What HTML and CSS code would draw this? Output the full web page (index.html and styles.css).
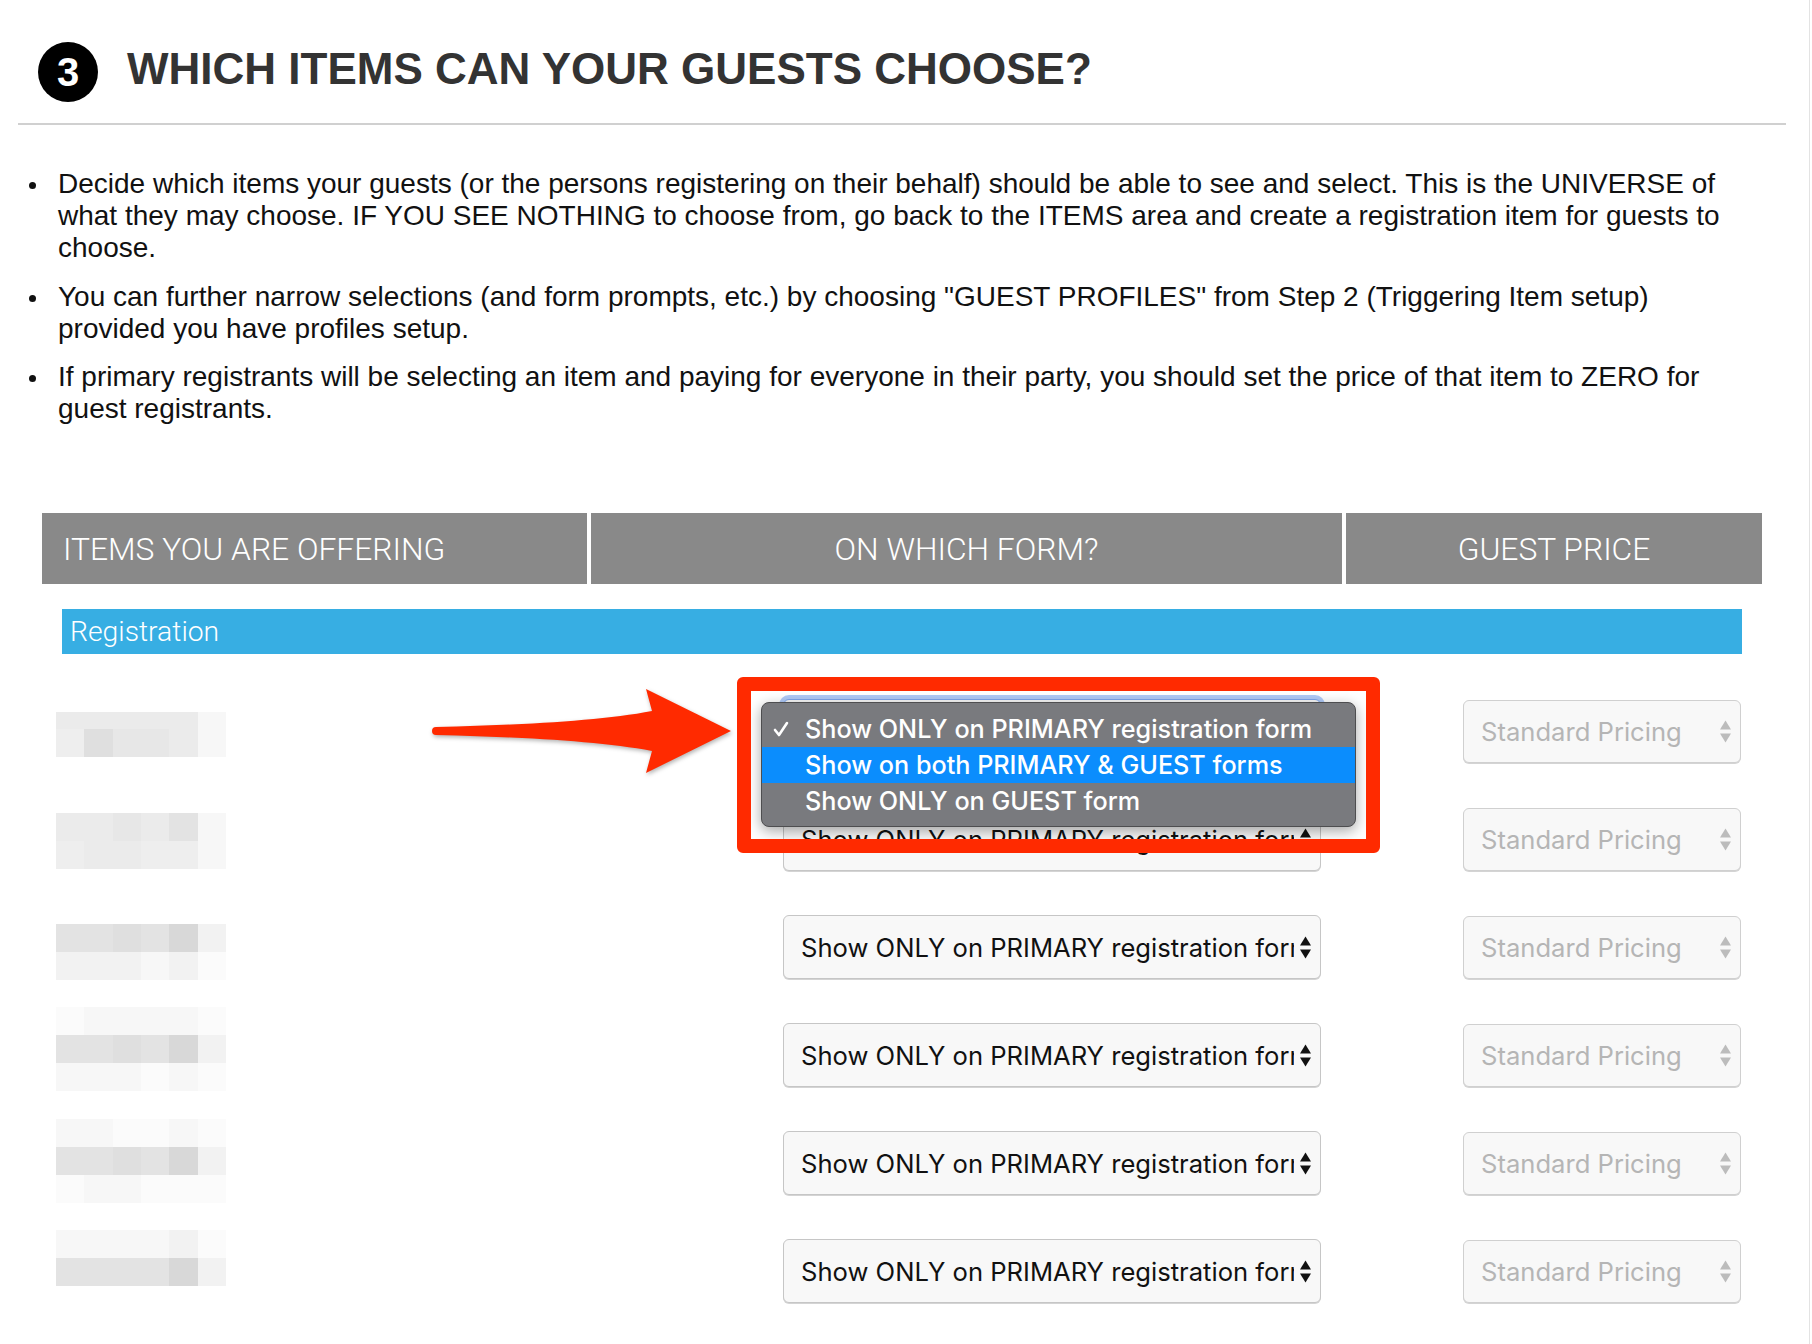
FILE: index.html
```html
<!DOCTYPE html>
<html>
<head>
<meta charset="utf-8">
<title>Which items can your guests choose?</title>
<link rel="stylesheet" href="styles.css">
</head>
<body>
<div class="page">
  <header class="step-head">
    <span class="step-num">3</span>
    <h1 class="step-title">WHICH ITEMS CAN YOUR GUESTS CHOOSE?</h1>
  </header>
  <div class="rule"></div>

  <ul class="notes">
    <li>Decide which items your guests (or the persons registering on their behalf) should be able to see and select. This is the UNIVERSE of what they may choose. IF YOU SEE NOTHING to choose from, go back to the ITEMS area and create a registration item for guests to choose.</li>
    <li>You can further narrow selections (and form prompts, etc.) by choosing "GUEST PROFILES" from Step 2 (Triggering Item setup) provided you have profiles setup.</li>
    <li>If primary registrants will be selecting an item and paying for everyone in their party, you should set the price of that item to ZERO for guest registrants.</li>
  </ul>

  <div class="table-head">
    <div class="th th-left">ITEMS YOU ARE OFFERING</div>
    <div class="th">ON WHICH FORM?</div>
    <div class="th">GUEST PRICE</div>
  </div>

  <div class="group-bar">Registration</div>

  <div class="rows">
    <div class="row">
      <div class="mosaic mo1">
        <i class="k5 short"></i><i class="k5 short"></i><i class="k5 short"></i><i class="k5 short"></i><i class="k5 short"></i><i class="k2 short"></i>
        <i class="k4"></i><i class="k8"></i><i class="k6"></i><i class="k6"></i><i class="k5"></i><i class="k2"></i>
      </div>
      <div class="select-wrap open">
        <div class="select focused">
          <span class="select-text">Show ONLY on PRIMARY registration form</span>
          <svg class="updown" width="11" height="23" viewBox="0 0 11 23"><polygon points="0,9.5 5.5,0.5 11,9.5"/><polygon points="0,13.5 11,13.5 5.5,22.5"/></svg>
        </div>
        <div class="menu">
          <div class="menu-item">
            <svg class="check" width="16" height="16" viewBox="0 0 16 16"><path d="M2 9 L6 14 L14 2"/></svg>
            Show ONLY on PRIMARY registration form
          </div>
          <div class="menu-item active">Show on both PRIMARY &amp; GUEST forms</div>
          <div class="menu-item">Show ONLY on GUEST form</div>
        </div>
        <div class="callout"></div>
        <svg class="pointer" width="310" height="96" viewBox="0 0 310 96"><path d="M6 42 C90 40 170 36 222 26 L216 4 L301 46 L216 88 L222 66 C170 56 90 52 6 50 A4 4 0 0 1 6 42 Z"/></svg>
      </div>
      <div class="select price">
        <span class="select-text">Standard Pricing</span>
        <svg class="updown" width="11" height="23" viewBox="0 0 11 23"><polygon points="0,9.5 5.5,0.5 11,9.5"/><polygon points="0,13.5 11,13.5 5.5,22.5"/></svg>
      </div>
    </div>

    <div class="row">
      <div class="mosaic mo2">
        <i class="k5"></i><i class="k5"></i><i class="k6"></i><i class="k5"></i><i class="k7"></i><i class="k2"></i>
        <i class="k4"></i><i class="k5"></i><i class="k5"></i><i class="k4"></i><i class="k4"></i><i class="k2"></i>
      </div>
      <div class="select-wrap">
        <div class="select">
          <span class="select-text">Show ONLY on PRIMARY registration form</span>
          <svg class="updown" width="11" height="23" viewBox="0 0 11 23"><polygon points="0,9.5 5.5,0.5 11,9.5"/><polygon points="0,13.5 11,13.5 5.5,22.5"/></svg>
        </div>
      </div>
      <div class="select price">
        <span class="select-text">Standard Pricing</span>
        <svg class="updown" width="11" height="23" viewBox="0 0 11 23"><polygon points="0,9.5 5.5,0.5 11,9.5"/><polygon points="0,13.5 11,13.5 5.5,22.5"/></svg>
      </div>
    </div>

    <div class="row">
      <div class="mosaic mo3">
        <i class="k7"></i><i class="k7"></i><i class="k8"></i><i class="k7"></i><i class="k9"></i><i class="k3"></i>
        <i class="k3"></i><i class="k3"></i><i class="k3"></i><i class="k2"></i><i class="k3"></i><i class="k1"></i>
      </div>
      <div class="select-wrap">
        <div class="select">
          <span class="select-text">Show ONLY on PRIMARY registration form</span>
          <svg class="updown" width="11" height="23" viewBox="0 0 11 23"><polygon points="0,9.5 5.5,0.5 11,9.5"/><polygon points="0,13.5 11,13.5 5.5,22.5"/></svg>
        </div>
      </div>
      <div class="select price">
        <span class="select-text">Standard Pricing</span>
        <svg class="updown" width="11" height="23" viewBox="0 0 11 23"><polygon points="0,9.5 5.5,0.5 11,9.5"/><polygon points="0,13.5 11,13.5 5.5,22.5"/></svg>
      </div>
    </div>

    <div class="row">
      <div class="mosaic mo4">
        <i class="k1"></i><i class="k2"></i><i class="k2"></i><i class="k2"></i><i class="k2"></i><i class="k1"></i>
        <i class="k7"></i><i class="k7"></i><i class="k8"></i><i class="k7"></i><i class="k9"></i><i class="k3"></i>
        <i class="k2"></i><i class="k2"></i><i class="k2"></i><i class="k1"></i><i class="k2"></i><i class="k1"></i>
      </div>
      <div class="select-wrap">
        <div class="select">
          <span class="select-text">Show ONLY on PRIMARY registration form</span>
          <svg class="updown" width="11" height="23" viewBox="0 0 11 23"><polygon points="0,9.5 5.5,0.5 11,9.5"/><polygon points="0,13.5 11,13.5 5.5,22.5"/></svg>
        </div>
      </div>
      <div class="select price">
        <span class="select-text">Standard Pricing</span>
        <svg class="updown" width="11" height="23" viewBox="0 0 11 23"><polygon points="0,9.5 5.5,0.5 11,9.5"/><polygon points="0,13.5 11,13.5 5.5,22.5"/></svg>
      </div>
    </div>

    <div class="row">
      <div class="mosaic mo5">
        <i class="k2"></i><i class="k2"></i><i class="k1"></i><i class="k1"></i><i class="k2"></i><i class="k1"></i>
        <i class="k7"></i><i class="k7"></i><i class="k8"></i><i class="k7"></i><i class="k9"></i><i class="k3"></i>
        <i class="k1"></i><i class="k2"></i><i class="k2"></i><i class="k1"></i><i class="k1"></i><i class="k1"></i>
      </div>
      <div class="select-wrap">
        <div class="select">
          <span class="select-text">Show ONLY on PRIMARY registration form</span>
          <svg class="updown" width="11" height="23" viewBox="0 0 11 23"><polygon points="0,9.5 5.5,0.5 11,9.5"/><polygon points="0,13.5 11,13.5 5.5,22.5"/></svg>
        </div>
      </div>
      <div class="select price">
        <span class="select-text">Standard Pricing</span>
        <svg class="updown" width="11" height="23" viewBox="0 0 11 23"><polygon points="0,9.5 5.5,0.5 11,9.5"/><polygon points="0,13.5 11,13.5 5.5,22.5"/></svg>
      </div>
    </div>

    <div class="row">
      <div class="mosaic mo6">
        <i class="k2"></i><i class="k2"></i><i class="k2"></i><i class="k2"></i><i class="k3"></i><i class="k1"></i>
        <i class="k7"></i><i class="k7"></i><i class="k7"></i><i class="k7"></i><i class="k9"></i><i class="k3"></i>
      </div>
      <div class="select-wrap">
        <div class="select">
          <span class="select-text">Show ONLY on PRIMARY registration form</span>
          <svg class="updown" width="11" height="23" viewBox="0 0 11 23"><polygon points="0,9.5 5.5,0.5 11,9.5"/><polygon points="0,13.5 11,13.5 5.5,22.5"/></svg>
        </div>
      </div>
      <div class="select price">
        <span class="select-text">Standard Pricing</span>
        <svg class="updown" width="11" height="23" viewBox="0 0 11 23"><polygon points="0,9.5 5.5,0.5 11,9.5"/><polygon points="0,13.5 11,13.5 5.5,22.5"/></svg>
      </div>
    </div>
  </div>
</div>
</body>
</html>
```

FILE: styles.css
```css
* { box-sizing: border-box; }

html, body {
  margin: 0;
  padding: 0;
  background: #ffffff;
}

body {
  font-family: "Liberation Sans", Arial, Helvetica, sans-serif;
  color: #111111;
}

.page {
  width: 1810px;
  min-height: 1344px;
  border-right: 1px solid #e3e3e3;
  overflow: hidden;
}

/* ---------- step heading ---------- */
.step-head {
  display: flex;
  align-items: center;
  gap: 29px;
  padding: 42px 0 0 38px;
}

.step-num {
  width: 60px;
  height: 60px;
  border-radius: 50%;
  background: #000000;
  color: #ffffff;
  font-weight: bold;
  font-size: 40px;
  display: flex;
  align-items: center;
  justify-content: center;
  flex: none;
}

.step-title {
  margin: 0;
  padding-bottom: 7px;
  font-size: 44px;
  font-weight: bold;
  color: #333333;
  line-height: 53px;
}

.rule {
  margin: 21px 0 0 18px;
  width: 1768px;
  height: 2px;
  background: #d0d0d0;
}

/* ---------- notes ---------- */
.notes {
  list-style: none;
  margin: 43px 0 0 0;
  padding: 0 0 0 58px;
  width: 1740px;
  font-size: 28px;
  line-height: 32px;
  color: #111111;
}

.notes li {
  position: relative;
  margin-bottom: 16.5px;
}

.notes li::before {
  content: "";
  position: absolute;
  left: -29px;
  top: 14px;
  width: 7px;
  height: 7px;
  border-radius: 50%;
  background: #111111;
}

.notes li:last-child {
  margin-bottom: 0;
}

/* ---------- table head ---------- */
.table-head {
  display: grid;
  grid-template-columns: 545px 751px 416px;
  column-gap: 4px;
  margin: 88px 0 0 42px;
}

.th {
  height: 71px;
  background: #898989;
  color: #ffffff;
  font-family: Roboto, "Liberation Sans", sans-serif;
  font-weight: 300;
  font-size: 31.8px;
  display: flex;
  align-items: center;
  justify-content: center;
}

.th-left {
  justify-content: flex-start;
  padding-left: 21px;
}

.group-bar {
  margin: 25px 0 0 62px;
  width: 1680px;
  height: 45px;
  background: #37aee3;
  color: #ffffff;
  font-family: Roboto, "Liberation Sans", sans-serif;
  font-weight: 300;
  font-size: 28.3px;
  display: flex;
  align-items: center;
  padding-left: 8px;
}

/* ---------- rows ---------- */
.rows {
  margin-top: 23px;
  padding-left: 56px;
}

.row {
  display: flex;
  align-items: center;
  height: 108px;
}

.mosaic {
  display: grid;
  grid-template-columns: repeat(6, 28.33px);
  grid-auto-rows: 28px;
  width: 170px;
  margin-right: 557px;
  align-self: flex-start;
  flex: none;
}

.mosaic i { display: block; }
.mosaic i.short { height: 17px; }
.mo1 { margin-top: 35px; grid-template-rows: 17px 28px; }
.mo2 { margin-top: 28px; }
.mo3 { margin-top: 31px; }
.mo4 { margin-top: 6px; }
.mo5 { margin-top: 10px; }
.mo6 { margin-top: 13px; }

.k1 { background: #fbfbfb; }
.k2 { background: #f7f7f7; }
.k3 { background: #f2f2f2; }
.k4 { background: #eeeeee; }
.k5 { background: #ebebeb; }
.k6 { background: #e7e7e7; }
.k7 { background: #e3e3e3; }
.k8 { background: #dfdfdf; }
.k9 { background: #d8d8d8; }

.select-wrap {
  position: relative;
  width: 538px;
  flex: none;
}

.select-wrap.open { z-index: 2; }

.select {
  height: 64px;
  border: 1px solid #c6c6c6;
  border-radius: 6px;
  background: #f8f8f8;
  box-shadow: 0 1px 0 #d4d4d4;
  display: flex;
  align-items: center;
  padding: 0 9px 0 17px;
  font-family: Inter, "Noto Sans", sans-serif;
  font-size: 25.6px;
  color: #111111;
}

.select.focused {
  border-color: #7ea6ee;
  box-shadow: 0 0 0 4px rgba(112, 158, 240, 0.55);
}

.select-text {
  flex: 1;
  white-space: nowrap;
  overflow: hidden;
}

.updown {
  flex: none;
  margin-left: 6px;
  fill: #111111;
}

.price {
  width: 278px;
  height: 63px;
  margin-left: 142px;
  flex: none;
  border-color: #d0d0d0;
  color: #b5b5b5;
  padding-right: 9px;
}

.price .updown { fill: #bcbcbc; }

/* ---------- open dropdown overlay ---------- */
.menu {
  position: absolute;
  left: -22px;
  top: 3px;
  width: 595px;
  height: 125px;
  padding-top: 8px;
  background: #797a7e;
  border: 1px solid #4e4e50;
  border-radius: 8px;
  box-shadow: 0 4px 14px rgba(0, 0, 0, 0.35);
  font-family: Inter, "Noto Sans", sans-serif;
  font-weight: 500;
  font-size: 25.2px;
  color: #ffffff;
}

.menu-item {
  position: relative;
  height: 36px;
  line-height: 36px;
  padding-left: 43px;
  white-space: nowrap;
}

.menu-item.active {
  background: #0b8dfd;
}

.check {
  position: absolute;
  left: 11px;
  top: 10px;
  fill: none;
  stroke: #ffffff;
  stroke-width: 2.6;
  stroke-linecap: round;
  stroke-linejoin: round;
}

.callout {
  position: absolute;
  left: -46px;
  top: -22px;
  width: 643px;
  height: 176px;
  border: 14px solid #ff2a00;
  border-radius: 6px;
}

.pointer {
  position: absolute;
  left: -353px;
  top: -14px;
  fill: #ff2a00;
  filter: drop-shadow(1px 2px 2px rgba(0, 0, 0, 0.3));
}
```
